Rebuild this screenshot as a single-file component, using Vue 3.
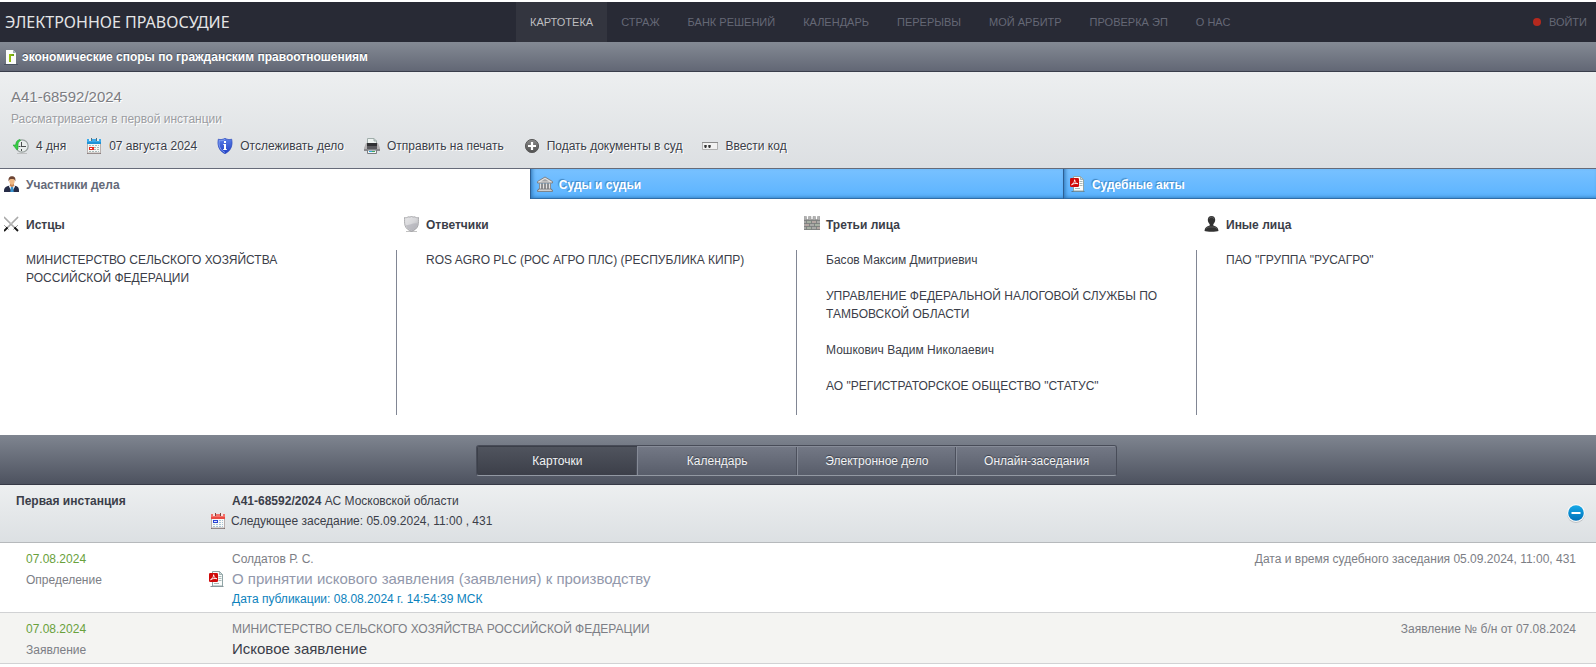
<script setup>
import { ref } from 'vue'

const navItems = ['Картотека', 'Страж', 'Банк решений', 'Календарь', 'Перерывы', 'Мой арбитр', 'Проверка ЭП', 'О нас']

const tools = [
  { icon: 'history', label: '4 дня' },
  { icon: 'calendar-blue', label: '07 августа 2024' },
  { icon: 'info-shield', label: 'Отслеживать дело' },
  { icon: 'printer', label: 'Отправить на печать' },
  { icon: 'plus', label: 'Подать документы в суд' },
  { icon: 'code', label: 'Ввести код' },
]

const tabs = [
  { icon: 'person', label: 'Участники дела' },
  { icon: 'court', label: 'Суды и судьи' },
  { icon: 'pdf', label: 'Судебные акты' },
]
const activeTab = ref(0)

const parties = [
  { icon: 'swords', title: 'Истцы', names: ['МИНИСТЕРСТВО СЕЛЬСКОГО ХОЗЯЙСТВА РОССИЙСКОЙ ФЕДЕРАЦИИ'] },
  { icon: 'shield', title: 'Ответчики', names: ['ROS AGRO PLC (РОС АГРО ПЛС) (РЕСПУБЛИКА КИПР)'] },
  {
    icon: 'wall',
    title: 'Третьи лица',
    names: [
      'Басов Максим Дмитриевич',
      'УПРАВЛЕНИЕ ФЕДЕРАЛЬНОЙ НАЛОГОВОЙ СЛУЖБЫ ПО ТАМБОВСКОЙ ОБЛАСТИ',
      'Мошкович Вадим Николаевич',
      'АО "РЕГИСТРАТОРСКОЕ ОБЩЕСТВО "СТАТУС"',
    ],
  },
  { icon: 'pawn', title: 'Иные лица', names: ['ПАО "ГРУППА "РУСАГРО"'] },
]

const views = ['Карточки', 'Календарь', 'Электронное дело', 'Онлайн-заседания']
const activeView = ref(0)
const expanded = ref(true)

const records = [
  {
    date: '07.08.2024',
    type: 'Определение',
    author: 'Солдатов Р. С.',
    title: 'О принятии искового заявления (заявления) к производству',
    file: true,
    published: 'Дата публикации: 08.08.2024 г. 14:54:39 МСК',
    note: 'Дата и время судебного заседания 05.09.2024, 11:00, 431',
  },
  {
    date: '07.08.2024',
    type: 'Заявление',
    author: 'МИНИСТЕРСТВО СЕЛЬСКОГО ХОЗЯЙСТВА РОССИЙСКОЙ ФЕДЕРАЦИИ',
    title: 'Исковое заявление',
    file: false,
    published: '',
    note: 'Заявление № б/н от 07.08.2024',
  },
]
</script>

<template>
  <div class="page">
    <svg class="sprite" aria-hidden="true">
      <defs>
        <linearGradient id="g-silver" x1="0" y1="0" x2="1" y2="1">
          <stop offset="0" stop-color="#e8e8ea" /><stop offset=".5" stop-color="#d6d6d9" /><stop offset="1" stop-color="#a9a9ae" />
        </linearGradient>
        <linearGradient id="g-blue" x1="0" y1="0" x2="0" y2="1">
          <stop offset="0" stop-color="#5b80e8" /><stop offset="1" stop-color="#1f3fc4" />
        </linearGradient>
        <linearGradient id="g-dark" x1="0" y1="0" x2="0" y2="1">
          <stop offset="0" stop-color="#8a8a8a" /><stop offset="1" stop-color="#505050" />
        </linearGradient>
        <linearGradient id="g-cyan" x1="0" y1="0" x2="0" y2="1">
          <stop offset="0" stop-color="#16a9e8" /><stop offset="1" stop-color="#0070b8" />
        </linearGradient>
        <linearGradient id="g-leaf" x1="0" y1="0" x2="1" y2="0">
          <stop offset="0" stop-color="#a4c811" /><stop offset="1" stop-color="#5e9d10" />
        </linearGradient>
      </defs>

      <symbol id="i-civil" viewBox="0 0 16 16">
        <path d="M0 15h14v1H0z" fill="#3f4956" opacity=".7" />
        <path d="M2 1h7l3 3v11H2z" fill="#fbfcfa" />
        <path d="M9 1l3 3H9z" fill="#9eb0b5" />
        <path d="M5 5h5v2H7v6H5z" fill="url(#g-leaf)" />
      </symbol>

      <symbol id="i-history" viewBox="0 0 16 16">
        <path d="M4 15h10v1H4z" fill="#aaa" opacity=".6" />
        <circle cx="9" cy="8" r="6.200" fill="#e9eeec" stroke="#98a09e" stroke-width="1.200" />
        <path d="M8.500 4v5M8.500 8.500H13M5.500 8.500h2M8.500 11v2" stroke="#4a4f4e" fill="none" />
        <path d="M7 1.500C4 2 2.800 4 2.800 7H0l4 4.800V12l1-1V7c0-2 .8-3.700 2.500-4.500z" fill="#3ad046" stroke="#1fa233" stroke-width=".6" />
      </symbol>

      <symbol id="i-calendar-blue" viewBox="0 0 16 16">
        <path d="M1 15h14v1H1z" fill="#7d6e6e" />
        <path d="M1.500 5h13v10h-13z" fill="#f5f6f4" stroke="#b8b0ae" />
        <path d="M1 1h14v5H1z" fill="#3ba9ea" />
        <path d="M1 4h14v2H1z" fill="#1e92d6" />
        <path d="M3 0h2v3H3zM11 0h2v3h-2z" fill="#e4ecee" />
        <path d="M5 0h1v3H5zM10 0h1v3h-1z" fill="#55707e" />
        <path d="M3 7.500h10M8 9.500h5M8 11.500h5M3 13.500h10" stroke="#a7b9b9" stroke-dasharray="2 1" />
        <path d="M3 9h5v3H3z" fill="#ea2b1f" />
        <path d="M4 10h2v1H4z" fill="#fff" />
      </symbol>

      <symbol id="i-calendar-red" viewBox="0 0 16 16">
        <path d="M1 15h14v1H1z" fill="#6d6262" />
        <path d="M1.500 5h13v10h-13z" fill="#f8f9f9" stroke="#b8adad" />
        <path d="M1 1h14v5H1z" fill="#f4716b" />
        <path d="M1 4h14v2H1z" fill="#ea4a42" />
        <path d="M3 0h2v3H3zM11 0h2v3h-2z" fill="#f7e2df" />
        <path d="M5 0h1v3H5zM10 0h1v3h-1z" fill="#7d4440" />
        <path d="M9 7.500h4M9 9.500h4M3 11.500h10M3 13.500h10" stroke="#a9c4d4" stroke-dasharray="2 1" />
        <path d="M3 7h5v3H3z" fill="#2a45d4" />
        <path d="M4 8h3v1H4z" fill="#dfe5ff" />
      </symbol>

      <symbol id="i-info-shield" viewBox="0 0 16 16">
        <path d="M8 0C6.500 1.500 3.500 2 1.300 1.200 1.200 3 .7 4 1 6c.4 4.500 3 8 7 9.700 4-1.700 6.600-5.200 7-9.700.3-2-.2-3-.3-4.800C12.500 2 9.500 1.500 8 0z" fill="url(#g-blue)" stroke="#2d4bbd" stroke-width=".7" />
        <path d="M8 1.400C6.500 2.500 4 3 2.300 2.500L2 6c.4 4 2.500 6.800 6 8.500" fill="none" stroke="#8eaaf6" stroke-width=".8" />
        <path d="M7 3h2v2H7zM6.300 6H9v5h.8v1H6.200v-1H7V7h-.7z" fill="#fff" />
      </symbol>

      <symbol id="i-printer" viewBox="0 0 16 16">
        <path d="M3.500 6V.500H10L12.500 3v3z" fill="#eef3f1" stroke="#a0aeab" />
        <path d="M10 .500V3h2.500" fill="#c4cfcc" stroke="#a0aeab" />
        <path d="M2 5h12l2 5v3H0v-3z" fill="#b3b1b2" />
        <path d="M3 5h10v3H3z" fill="#303134" />
        <path d="M3 8h10v3H3z" fill="#5a5a5e" />
        <path d="M0 11h16v2H0z" fill="#88888b" />
        <path d="M3.500 12h9v3.500h-9z" fill="#eef5f8" stroke="#7b7d80" />
        <path d="M5 13.500h3" stroke="#2ba4df" /><path d="M8 13.500h3" stroke="#43a85a" />
      </symbol>

      <symbol id="i-plus" viewBox="0 0 16 16">
        <circle cx="8" cy="8" r="6.600" fill="url(#g-dark)" stroke="#5c5c5c" />
        <path d="M8 4v8M4 8h8" stroke="#fff" stroke-width="2.200" />
      </symbol>

      <symbol id="i-code" viewBox="0 0 16 16">
        <path d="M.500 4.500h15v7H.500z" fill="#f2f2f2" stroke="#b1b1b1" />
        <path d="M0 4.500h16" stroke="#8c8c8c" />
        <path d="M2 7h3v2.500H2zM6 7h3v2.500H6z" fill="#6b6b6b" />
        <path d="M3 7h1v3H3zM7 7h1v3H7z" fill="#333" />
      </symbol>

      <symbol id="i-person" viewBox="0 0 16 16">
        <path d="M0 15c0-3.500 2-4.500 5.500-5.500h5C14 10.500 15 11.500 15 15v1H0z" fill="#262c47" />
        <path d="M5.500 9h5l.5 1.500-3 5.500-3-5.500z" fill="#f4f5f8" />
        <path d="M7 10.500h2l.7 5.500H6.300z" fill="#3a95d1" />
        <path d="M6 7h4v3l-2 1.300L6 10z" fill="#c98755" />
        <ellipse cx="8" cy="5" rx="2.700" ry="3.700" fill="#f0b884" />
        <path d="M4.700 5.500C4 2 5.500.2 8 .2s4 1.800 3.300 5.300C10.800 3.500 10 3 8 3s-2.800.5-3.300 2.500z" fill="#6d4534" />
      </symbol>

      <symbol id="i-court" viewBox="0 0 16 16">
        <path d="M8 1l7.500 4.500V7H.500V5.500z" fill="#dcdcdc" stroke="#7b7c7e" stroke-width=".9" />
        <path d="M4 5.500l4-2.500 4 2.500z" fill="#a3a3a3" />
        <path d="M2 7.500h12V13H2z" fill="#6f7173" />
        <path d="M3.500 7.500V13M6.500 7.500V13M9.500 7.500V13M12.500 7.500V13" stroke="#e2e2e2" stroke-width="1.500" />
        <path d="M1.500 13h13v1h1v1.500H.500V14h1z" fill="#cfcfcf" stroke="#737577" stroke-width=".8" />
      </symbol>

      <symbol id="i-pdf" viewBox="0 0 16 16">
        <path d="M1.500 15h13v1h-13z" fill="#51646a" opacity=".7" />
        <path d="M3.500.500h7l3 3v11.500h-10z" fill="#fafcfb" stroke="#90a4a6" />
        <path d="M10.500.500v3h3z" fill="#cfdbdc" stroke="#90a4a6" stroke-width=".8" />
        <path d="M9.500 5.500h3M9.500 7.500h3M9.500 9.500h3M5 12.500h5" stroke="#a9b9b8" />
        <rect x="0" y="2" width="9" height="9" rx="1.300" fill="#cf0a0a" />
        <path d="M1.500 8.700C3.500 8 4.500 6 4.600 3.700c.5 2.300 1.300 3.700 3.200 4-2-.5-4-.2-6.300 1z" fill="none" stroke="#fff" stroke-width=".9" />
      </symbol>

      <symbol id="i-swords" viewBox="0 0 16 16">
        <path d="M0 1l11 11M14 1L3 12" stroke="#8f8f8f" stroke-width="1.500" />
        <path d="M0 .500l11 11M14 .500L3 11.500" stroke="#e9e9e9" stroke-width=".6" />
        <path d="M.500 9.500l4 4M13.500 9.500l-4 4" stroke="#444" stroke-dasharray="1.500 .5" />
        <path d="M0 15l3.500-3.500M14 15l-3.500-3.500" stroke="#161616" stroke-width="1.800" />
      </symbol>

      <symbol id="i-shield" viewBox="0 0 16 16">
        <path d="M2 15h11v1H2z" fill="#999" opacity=".6" />
        <path d="M.500 1.500c1.500.4 2.700.2 3.500-.7C5.500 1.200 6.500 1 7.500.5c1 .5 2 .7 3.500.3.800.9 2 1.100 3.500.7-.3 2.500.3 5-.5 8-.8 3-3.500 4.700-6.500 6-3-1.300-5.700-3-6.500-6-.8-3-.2-5.500-.5-8z" fill="url(#g-silver)" stroke="#9b9b9e" stroke-width=".8" />
        <path d="M1.800 9c3 1 7-2.500 11.400-1.500.2 3.500-2 5.500-5.700 7-3.500-1.500-5.500-3-5.700-5.500z" fill="#b3b4ba" opacity=".7" />
      </symbol>

      <symbol id="i-wall" viewBox="0 0 16 16">
        <path d="M0 3h16v11H0z" fill="#a9a9a8" />
        <path d="M0 .500h2.500V4H0zM4.500 .500H7V4H4.500zM9 .500h2.500V4H9zM13.500 .500H16V4h-2.500z" fill="#b4b4b4" stroke="#8d8d8d" stroke-width=".5" />
        <path d="M0 4.500h16M0 7.500h16M0 10.500h16M0 13.500h16M2.500 4.500v3M7.500 4.500v3M12.500 4.500v3M5.500 7.500v3M10.500 7.500v3M2.500 10.500v3M7.500 10.500v3M12.500 10.500v3" fill="none" stroke="#777b7a" stroke-width=".8" />
        <path d="M3 6h4M11 9h4M3 12h4" stroke="#a3b79c" /><path d="M8 6h4M1 9h4M13 12h3" stroke="#bea29c" />
      </symbol>

      <symbol id="i-pawn" viewBox="0 0 16 16">
        <path d="M7.500 0c2.300 0 3.700 1.500 3.700 3.800 0 2-.9 3.400-1.900 4.400v1.300c3 .8 5 2.200 5.200 5.500-2 1-12 1-14 0 .2-3.300 2.200-4.700 5.200-5.500V8.200c-1-1-1.900-2.400-1.900-4.400C3.800 1.500 5.200 0 7.500 0z" fill="#323232" />
        <path d="M5 3c.4-1.300 1.300-1.800 2.500-1.800S9.600 1.700 10 3M2 12.500c2-1.500 3-1.500 5.500-1.500s3.500 0 5.500 1.500" fill="none" stroke="#676767" stroke-width=".8" />
      </symbol>

      <symbol id="i-minus" viewBox="0 0 20 20">
        <circle cx="10" cy="11" r="9" fill="#bfc2c5" />
        <circle cx="10" cy="10" r="9" fill="#fafafa" />
        <circle cx="10" cy="10" r="7.800" fill="url(#g-cyan)" />
        <path d="M5.500 10h9" stroke="#fff" stroke-width="2" />
      </symbol>
    </svg>

    <header class="topbar">
      <a class="brand" href="#">ЭЛЕКТРОННОЕ ПРАВОСУДИЕ</a>
      <nav class="nav">
        <a v-for="(item, i) in navItems" :key="item" href="#" :class="{ active: i === 0 }">{{ item }}</a>
      </nav>
      <a class="login" href="#"><span class="dot"></span>Войти</a>
    </header>

    <div class="category">
      <svg class="icon"><use href="#i-civil" /></svg>
      <span>экономические споры по гражданским правоотношениям</span>
    </div>

    <section class="case">
      <h1>А41-68592/2024</h1>
      <p class="state">Рассматривается в первой инстанции</p>
      <ul class="tools">
        <li v-for="tool in tools" :key="tool.label">
          <button type="button">
            <svg class="icon"><use :href="'#i-' + tool.icon" /></svg>{{ tool.label }}
          </button>
        </li>
      </ul>
    </section>

    <div class="tabs" role="tablist">
      <button
        v-for="(tab, i) in tabs"
        :key="tab.label"
        type="button"
        role="tab"
        :aria-selected="activeTab === i"
        :class="{ active: activeTab === i }"
        @click="activeTab = i"
      >
        <svg class="icon"><use :href="'#i-' + tab.icon" /></svg><span>{{ tab.label }}</span>
      </button>
    </div>

    <section class="parties">
      <div v-for="party in parties" :key="party.title" class="party">
        <h2><svg class="icon"><use :href="'#i-' + party.icon" /></svg>{{ party.title }}</h2>
        <ul>
          <li v-for="name in party.names" :key="name">{{ name }}</li>
        </ul>
      </div>
    </section>

    <div class="viewbar">
      <div class="segments">
        <button
          v-for="(view, i) in views"
          :key="view"
          type="button"
          :class="{ active: activeView === i }"
          @click="activeView = i"
        >{{ view }}</button>
      </div>
    </div>

    <section>
      <header class="instance">
        <h2>Первая инстанция</h2>
        <div class="court">
          <p><strong>А41-68592/2024</strong> АС Московской области</p>
          <p class="hearing"><svg class="icon"><use href="#i-calendar-red" /></svg>Следующее заседание: 05.09.2024, 11:00 , 431</p>
        </div>
        <button class="toggle" type="button" aria-label="Свернуть" @click="expanded = !expanded">
          <svg><use href="#i-minus" /></svg>
        </button>
      </header>
      <ul v-if="expanded" class="records">
        <li v-for="record in records" :key="record.type">
          <div class="kind">
            <p class="date">{{ record.date }}</p>
            <p>{{ record.type }}</p>
          </div>
          <div class="body">
            <p>{{ record.author }}</p>
            <h3 v-if="record.file"><svg class="icon"><use href="#i-pdf" /></svg><a href="#">{{ record.title }}</a></h3>
            <h3 v-else><span>{{ record.title }}</span></h3>
            <p v-if="record.published" class="published">{{ record.published }}</p>
          </div>
          <p class="note">{{ record.note }}</p>
        </li>
      </ul>
    </section>
  </div>
</template>

<style>
body {
  background: #fff;
}
</style>

<style scoped>
.page {
  padding-top: 2px;
  overflow: hidden;
  font: 12px/18px "Liberation Sans", Arial, sans-serif;
  color: #3b3e49;
}
h1, h2, h3, p, ul {
  margin: 0;
  padding: 0;
  font-size: inherit;
  font-weight: inherit;
  list-style: none;
}
button {
  padding: 0;
  border: 0;
  background: none;
  color: inherit;
  font: inherit;
  cursor: pointer;
}
a {
  color: inherit;
  text-decoration: none;
}
.sprite {
  position: absolute;
  width: 0;
  height: 0;
}
.icon {
  flex: none;
  width: 16px;
  height: 16px;
}

.topbar {
  display: flex;
  height: 40px;
  background: #282a35;
  color: #656875;
  font-size: 11px;
  line-height: 40px;
  text-transform: uppercase;
}
.brand {
  box-sizing: border-box;
  width: 516px;
  padding-left: 5px;
  color: #e4e4e6;
  font-family: "Noto Sans", "Open Sans", sans-serif;
  font-size: 16px;
}
.nav {
  display: flex;
}
.nav a {
  padding: 0 14px;
}
.nav a.active {
  background: #33353f;
  color: #bebec0;
}
.login {
  display: flex;
  align-items: center;
  gap: 8px;
  margin-left: auto;
  padding-right: 9px;
}
.dot {
  width: 8px;
  height: 8px;
  border-radius: 50%;
  background: #b5291e;
}

.category {
  display: flex;
  align-items: center;
  gap: 2px;
  height: 29px;
  padding-left: 4px;
  border-bottom: 1px solid #3a3e4b;
  background: linear-gradient(#848a94, #626775);
  color: #fff;
  font-weight: bold;
  text-shadow: 0 -1px 1px #434a58;
}

.case {
  padding: 16px 11px 13px;
  border-bottom: 1px solid #666b79;
  background: linear-gradient(#edeff0, #dcdfe2);
  text-shadow: 1px 1px 0 #fff;
}
.case h1 {
  color: #7c7d82;
  font-size: 15px;
}
.state {
  margin-top: 4px;
  color: #9b9da2;
}
.tools {
  display: flex;
  flex-wrap: wrap;
  gap: 20px;
  margin-top: 9px;
  padding-left: 2px;
}
.tools button {
  display: flex;
  align-items: center;
  gap: 7px;
  text-shadow: inherit;
}

.tabs {
  display: grid;
  grid-template-columns: 33.2% 33.4% 33.4%;
}
.tabs button {
  display: flex;
  align-items: center;
  gap: 6px;
  height: 30px;
  padding-left: 7px;
  background: linear-gradient(#78c1ff, #5ab3ff);
  box-shadow: inset 1px 0 0 #2d5f93, inset 0 -1px 0 #316ea8, inset 5px 0 4px -3px #2b70b0, inset 0 -4px 4px -3px #2b70b0;
  color: #fff;
  font-weight: bold;
  text-shadow: -1px -1px 1px #3f84c0;
}
.tabs button.active {
  padding-left: 4px;
  background: #fff;
  box-shadow: none;
  color: #656a79;
  text-shadow: none;
}
.tabs span {
  padding-top: 2px;
}

.parties {
  display: grid;
  grid-template-columns: repeat(4, 1fr);
  margin-right: -4px;
  padding: 17px 0 20px;
}
.party {
  display: flex;
  flex-direction: column;
  gap: 16px;
}
.party h2 {
  display: flex;
  gap: 6px;
  padding-left: 4px;
  font-weight: bold;
}
.party ul {
  flex: 1;
  margin-right: 3px;
  padding: 1px 32px 2px 26px;
  border-right: 1px solid #818694;
}
.party:last-child ul {
  border: 0;
}
.party li {
  margin-bottom: 18px;
}

.viewbar {
  display: flex;
  justify-content: center;
  padding: 10px 3px 8px 0;
  border-bottom: 1px solid #363946;
  background: linear-gradient(#7f8590, #4d525f);
}
.segments {
  display: grid;
  grid-template-columns: repeat(4, 1fr);
  box-sizing: border-box;
  width: 641px;
  height: 31px;
  overflow: hidden;
  border: 1px solid #484c58;
  border-bottom-color: #9298a2;
  border-radius: 3px;
  background: linear-gradient(#747986, #585d6a);
}
.segments button {
  border-left: 1px solid #868b97;
  border-top: 1px solid #878c98;
  box-shadow: inset -1px 0 0 #4c505c;
  color: #f2f3f4;
  text-shadow: 0 -1px 1px #3c404b;
}
.segments button:last-child {
  box-shadow: none;
}
.segments button.active {
  border-color: #3b3f49;
  background: linear-gradient(#50545e, #3c3f49);
}

.instance {
  display: flex;
  align-items: flex-start;
  padding: 7px 10px 10px 16px;
  border-bottom: 1px solid #b6b9bc;
  background: linear-gradient(#edeff0, #dce0e3);
}
.instance h2 {
  width: 194px;
  font-weight: bold;
}
.court {
  flex: 1;
}
.court p:first-child {
  padding-left: 22px;
}
.court .hearing {
  display: flex;
  align-items: center;
  gap: 5px;
  line-height: 22px;
}
.toggle {
  align-self: center;
  width: 20px;
  height: 20px;
  margin-top: 2px;
}
.toggle svg {
  display: block;
  width: 20px;
  height: 20px;
}

.records li {
  display: flex;
  padding: 7px 20px 2px 26px;
  border-bottom: 1px solid #d1d2d4;
  color: #7c7e85;
}
.records li:nth-child(even) {
  background: #f4f4f2;
}
.kind {
  width: 183px;
  line-height: 22px;
}
.kind .date {
  color: #69a13c;
  line-height: 19px;
}
.body {
  flex: 1;
}
.body p {
  padding-left: 23px;
  line-height: 19px;
}
.body h3 {
  display: flex;
  align-items: center;
  gap: 7px;
  color: #3b3e49;
  font-size: 15px;
  line-height: 20px;
}
.body h3 a {
  color: #9298ab;
}
.body h3 span {
  padding-left: 23px;
}
.body .published {
  color: #0c82bd;
  line-height: 21px;
}
</style>
